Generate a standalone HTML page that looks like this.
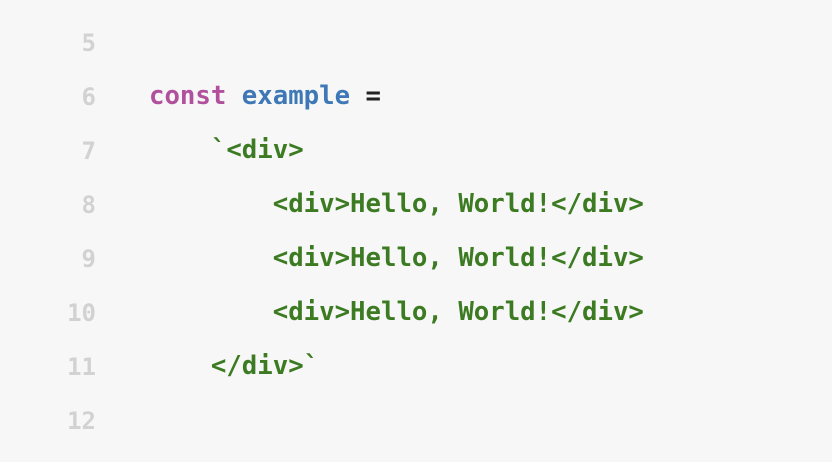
<!DOCTYPE html>
<html><head><style>
html,body{margin:0;padding:0;background:#f7f7f7;width:832px;height:462px;overflow:hidden}
.c{position:absolute;top:15px;left:0;font-family:"DejaVu Sans Mono",monospace;font-weight:bold;font-size:25.7px;line-height:54px;white-space:pre}
.n{position:absolute;top:16px;left:0;width:96px;text-align:right;font-family:"DejaVu Sans Mono",monospace;font-weight:bold;font-size:24px;line-height:54px;color:#d2d2d2}
.k{color:#b1509c}.v{color:#3f78b6}.s{color:#3c7b22}.o{color:#222}
</style></head><body>
<div class="n">5<br>6<br>7<br>8<br>9<br>10<br>11<br>12</div>
<div class="c" style="left:149px"> 
<span class="k">const</span> <span class="v">example</span> <span class="o">=</span>
    <span class="s">`&lt;div&gt;</span>
        <span class="s">&lt;div&gt;Hello, World!&lt;/div&gt;</span>
        <span class="s">&lt;div&gt;Hello, World!&lt;/div&gt;</span>
        <span class="s">&lt;div&gt;Hello, World!&lt;/div&gt;</span>
    <span class="s">&lt;/div&gt;`</span>
 </div>
</body></html>
